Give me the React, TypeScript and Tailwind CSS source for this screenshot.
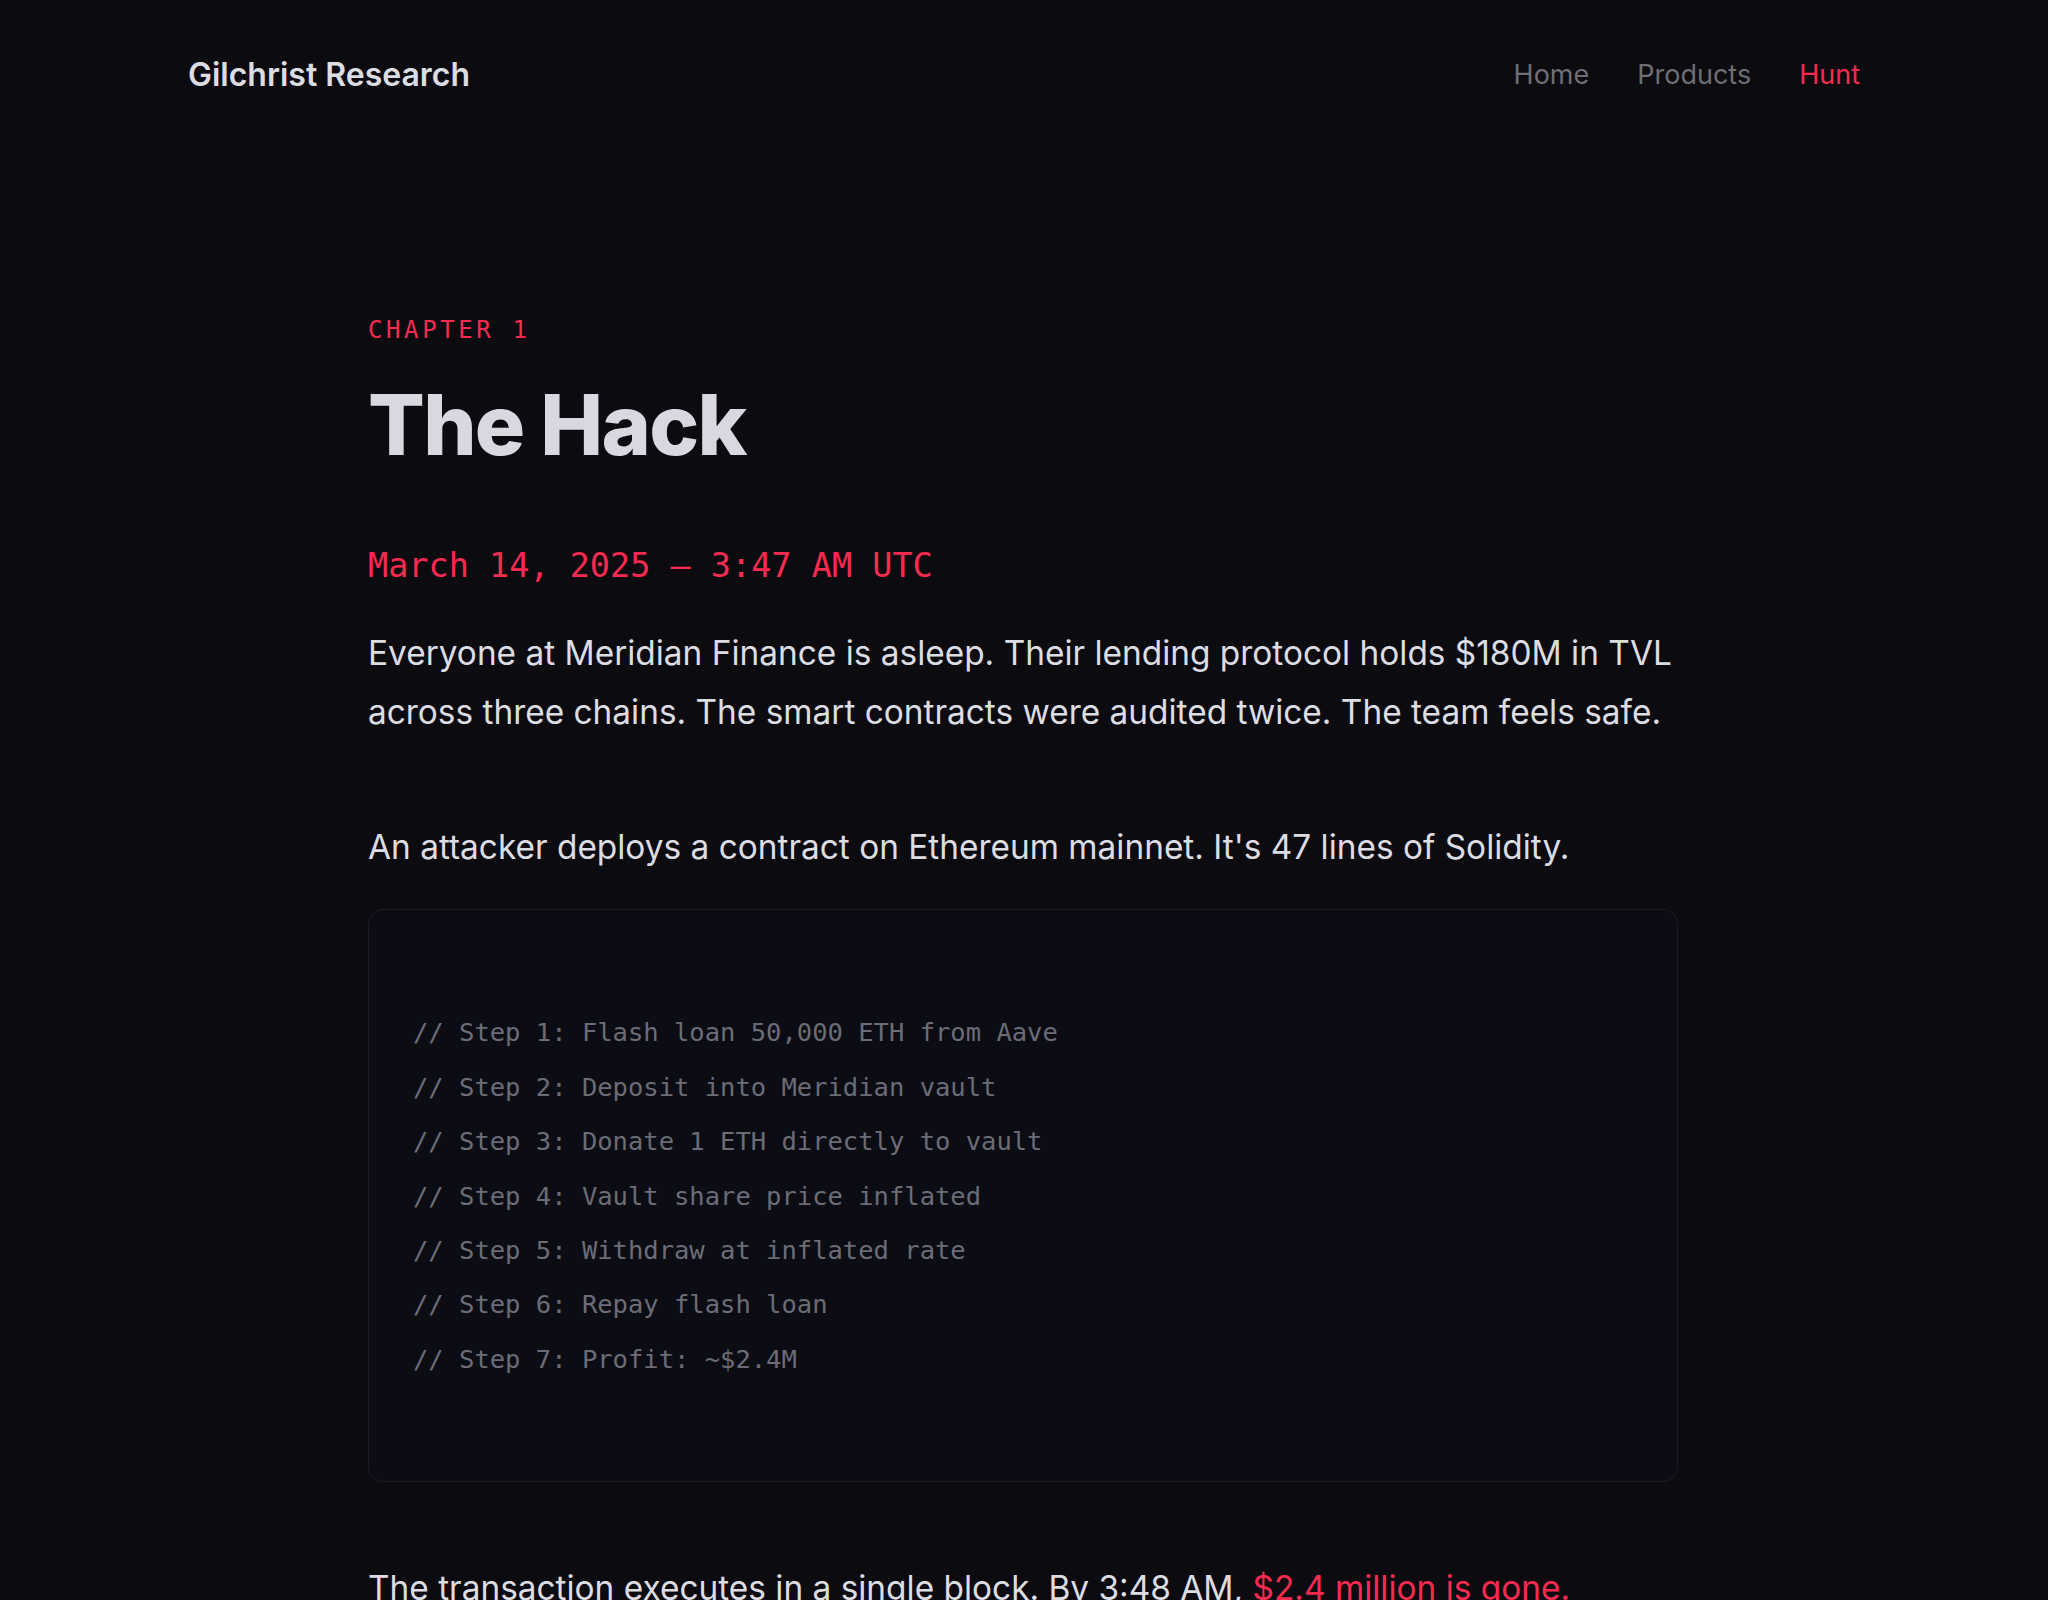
const steps = [
  "// Step 1: Flash loan 50,000 ETH from Aave",
  "// Step 2: Deposit into Meridian vault",
  "// Step 3: Donate 1 ETH directly to vault",
  "// Step 4: Vault share price inflated",
  "// Step 5: Withdraw at inflated rate",
  "// Step 6: Repay flash loan",
  "// Step 7: Profit: ~$2.4M",
];

const sans = "font-['Inter','Noto_Sans',sans-serif]";
const mono = "font-['DejaVu_Sans_Mono','Liberation_Mono',monospace]";

export default function App() {
  return (
    <div className={`min-h-screen bg-[#0b0b10] text-[#dcdce3] ${sans}`}>
      <nav className="mx-auto flex h-[150px] w-[1672px] items-center justify-between">
        <a href="#" className="text-[32px] font-semibold text-[#dcdce3]">
          Gilchrist Research
        </a>
        <div className="flex items-center gap-12 text-[27px]">
          <a href="#" className="text-[#6e6e74]">Home</a>
          <a href="#" className="text-[#6e6e74]">Products</a>
          <a href="#" className="text-[#f72a50]">Hunt</a>
        </div>
      </nav>

      <main className="mx-auto w-[1312px] pt-[164px]">
        <p className={`${mono} text-[24px] leading-[32px] tracking-[0.15em] text-[#f72a50]`}>
          CHAPTER 1
        </p>
        <h1 className="mt-[34px] text-[84px] font-extrabold leading-[90px] tracking-[-0.02em] text-[#d8d9e0]">
          The Hack
        </h1>

        <p className={`${mono} mt-[72px] text-[33.5px] leading-[48px] text-[#f72a50]`}>
          March 14, 2025 — 3:47 AM UTC
        </p>

        <p className="mt-[34px] text-[33.4px] leading-[58.8px]">
          Everyone at Meridian Finance is asleep. Their lending protocol holds $180M in TVL
          across three chains. The smart contracts were audited twice. The team feels safe.
        </p>

        <p className="mt-[76px] text-[33.4px] leading-[58.8px]">
          An attacker deploys a contract on Ethereum mainnet. It's 47 lines of Solidity.
        </p>

        <pre
          className={`${mono} mt-[33px] w-[1310px] rounded-[15px] border border-[#1d1d29] bg-[#0b0c14] py-[95px] pl-[44px] pr-[30px] text-[25.5px] leading-[54.4px] text-[#6c6c76]`}
        >
          {steps.map((s) => (
            <div key={s}>{s}</div>
          ))}
        </pre>

        <p className="mt-[77px] text-[33.4px] leading-[58.8px]">
          The transaction executes in a single block. By 3:48 AM,{" "}
          <span className="text-[#f72a50]">$2.4 million is gone.</span>
        </p>
      </main>
    </div>
  );
}
